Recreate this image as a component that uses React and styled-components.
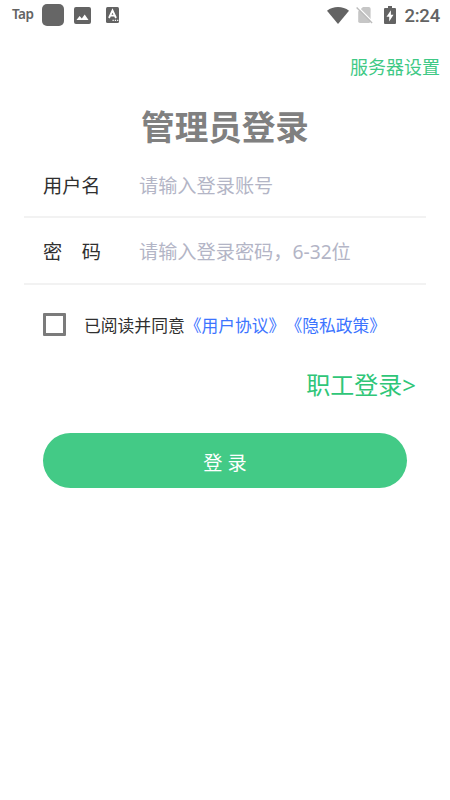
import React from "react";
import styled, { createGlobalStyle } from "styled-components";

const Global = createGlobalStyle`
  *, *::before, *::after { box-sizing: border-box; }
  body { margin: 0; background: #fff; }
  button, input { font: inherit; }
`;

const Screen = styled.main`
  width: 450px;
  height: 800px;
  display: flex;
  flex-direction: column;
  background: #fff;
  color: #303030;
  overflow: hidden;
  font-family: "Noto Sans", "Noto Sans CJK SC", sans-serif;
  white-space: nowrap;
`;

const StatusBar = styled.header`
  height: 30px;
  flex: none;
  display: flex;
  justify-content: space-between;
  padding: 0 10px 0 12px;
  color: #636363;
`;

const StatusGroup = styled.div`
  display: flex;
  align-items: center;
  svg { display: block; flex: none; }
`;

const TapMark = styled.span`
  width: 30px;
  font: 600 13.5px/20px "Noto Sans", sans-serif;
  letter-spacing: -0.5px;
  margin-top: -3px;
`;

const AppSquare = styled.span`
  width: 22px;
  height: 22px;
  border-radius: 5px;
  background: #666;
  margin-right: 10px;
`;

const Clock = styled.time`
  font: 500 18.5px/22px Roboto, sans-serif;
  margin-left: 8.500px;
  padding-top: 2px;
  letter-spacing: -0.2px;
`;

const ServerLink = styled.a`
  align-self: flex-end;
  height: 26px;
  margin: 24px 10px 0 0;
  font-size: 18px;
  line-height: 26px;
  color: #3fc985;
`;

const Title = styled.h1`
  margin: 22px 0 0;
  height: 50px;
  text-align: center;
  font-size: 33.6px;
  line-height: 50px;
  font-weight: 700;
  color: #808080;
`;

const Form = styled.form`
  display: flex;
  flex-direction: column;
`;

const Field = styled.label`
  display: flex;
  height: ${(p) => p.$height}px;
  margin: 0 24px;
  padding: 20px 0 0 19px;
  border-bottom: 2px solid #f2f2f2;
  font-size: 19.2px;
  line-height: 28px;
`;

const FieldName = styled.span`
  width: 96px;
  flex: none;
  display: flex;
  gap: 19.5px;
`;

const Input = styled.input`
  flex: 1;
  min-width: 0;
  height: 28px;
  padding: 0;
  border: 0;
  outline: 0;
  background: none;
  line-height: 28px;
  &::placeholder { color: #b3b5c6; opacity: 1; }
`;

const Agreement = styled.div`
  display: flex;
  align-items: center;
  height: 26px;
  margin: 26px 0 0 42px;
  font-size: 16.8px;
  line-height: 26px;
  > span, > a { padding-top: 3px; }
`;

const CheckBox = styled.input`
  appearance: none;
  width: 23px;
  height: 23px;
  margin: 0 18px 0 1px;
  border: 3px solid #7b7b7b;
  border-radius: 1px;
`;

const Policy = styled.a`
  color: #3c74ff;
`;

const StaffLink = styled.a`
  align-self: flex-end;
  height: 36px;
  margin: 30px 34px 0 0;
  font-size: 24px;
  line-height: 36px;
  color: #2fc678;
`;

const LoginButton = styled.button`
  height: 55px;
  margin: 30px 43px 0;
  padding: 4px 0 0;
  border: 0;
  border-radius: 28px;
  background: #43ca86;
  color: #fff;
  font-size: 19.2px;
  line-height: 28px;
`;

const PictureIcon = () => (
  <svg width="17" height="17" viewBox="0 0 17 17">
    <path fill="currentColor" fillRule="evenodd" d="M2 0h13a2 2 0 0 1 2 2v13a2 2 0 0 1-2 2H2a2 2 0 0 1-2-2V2a2 2 0 0 1 2-2ZM2.5 13h12L10.7 7.5 7.8 11.4 5.6 9Z" />
  </svg>
);

const TextIcon = () => (
  <svg width="13" height="16" viewBox="0 0 13 16">
    <rect width="13" height="16" rx="1.5" fill="currentColor" />
    <path d="M3 11 6.5 3.5 10 11M4.3 8.7h4.4" fill="none" stroke="#fff" strokeWidth="1.8" />
    <path d="M6.5 13.3h1.3m1 0h1.3m1 0h1.2" stroke="#fff" strokeWidth="1.2" />
  </svg>
);

const WifiIcon = () => (
  <svg width="22" height="17" viewBox="0 0 22 17">
    <path fill="currentColor" d="M0 3.7C6.3-1.2 15.7-1.2 22 3.7L11 17Z" />
  </svg>
);

const NoSimIcon = () => (
  <svg width="17" height="18" viewBox="0 0 17 18">
    <path fill="#c6c6c6" d="M7 1h5.8a1.8 1.8 0 0 1 1.8 1.8v12.4a1.8 1.8 0 0 1-1.8 1.800H4a1.800 1.800 0 0 1-1.800-1.800V5.600Z" />
    <path d="M1.600.8 16.600 15.800" stroke="#fff" strokeWidth="1.4" />
    <path d="m.6 1.6 15.500 15.500" stroke="#bbb" strokeWidth="1.4" />
  </svg>
);

const BatteryIcon = () => (
  <svg width="12" height="18" viewBox="0 0 12 18">
    <path fill="currentColor" d="M4 0h4v2h2.7c.8 0 1.3.5 1.3 1.3v13.4c0 .8-.5 1.3-1.3 1.3H1.3C.5 18 0 17.5 0 16.7V3.3C0 2.5.5 2 1.3 2H4Z" />
    <path fill="#fff" d="M6.9 4.3 2.5 10.8h2.7v4.8l4.3-6.9H6.9Z" />
  </svg>
);

const Spacer = styled.span`
  width: ${(p) => p.$w}px;
`;

export default function App() {
  return (
    <Screen>
      <Global />
      <StatusBar>
        <StatusGroup>
          <TapMark>Tap</TapMark>
          <AppSquare />
          <PictureIcon />
          <Spacer $w={15} />
          <TextIcon />
        </StatusGroup>
        <StatusGroup>
          <WifiIcon />
          <Spacer $w={7} />
          <NoSimIcon />
          <Spacer $w={11} />
          <BatteryIcon />
          <Clock>2:24</Clock>
        </StatusGroup>
      </StatusBar>
      <ServerLink>服务器设置</ServerLink>
      <Title>管理员登录</Title>
      <Form>
        <Field $height={66}>
          <FieldName>用户名</FieldName>
          <Input placeholder="请输入登录账号" />
        </Field>
        <Field $height={67}>
          <FieldName><span>密</span><span>码</span></FieldName>
          <Input type="password" placeholder="请输入登录密码，6-32位" />
        </Field>
        <Agreement>
          <CheckBox type="checkbox" aria-label="已阅读并同意" />
          <span>已阅读并同意</span>
          <Policy>《用户协议》</Policy>
          <Policy>《隐私政策》</Policy>
        </Agreement>
        <StaffLink>职工登录&gt;</StaffLink>
        <LoginButton type="button">登 录</LoginButton>
      </Form>
    </Screen>
  );
}
